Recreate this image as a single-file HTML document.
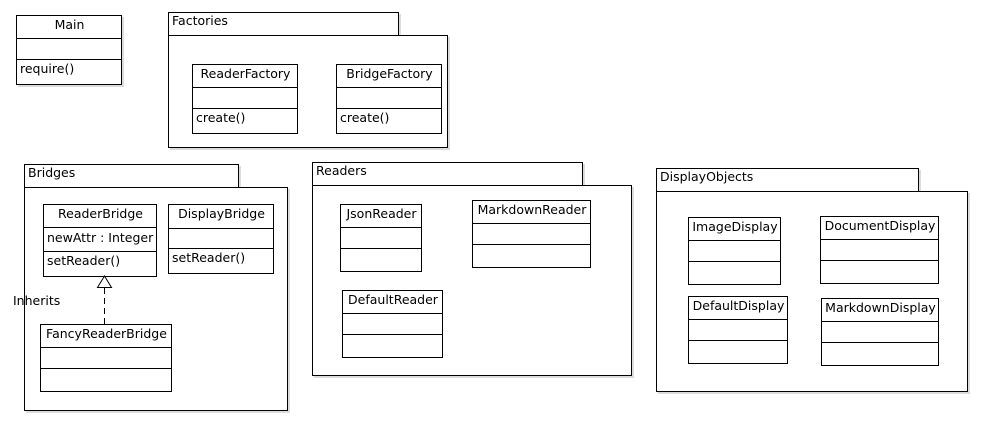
<!DOCTYPE html>
<html><head><meta charset="utf-8"><style>
html,body{margin:0;padding:0;background:#fff;}
svg{display:block;}
text{font-family:"DejaVu Sans","Liberation Sans",sans-serif;font-size:12.5px;fill:#000;}
</style></head><body>
<svg width="994" height="438" viewBox="0 0 994 438" xmlns="http://www.w3.org/2000/svg">
<g id="shadows" fill="#dcdcdc">
</g>
<g fill="none" stroke="#000" stroke-width="1" shape-rendering="crispEdges">
</g>
</svg>
<script>
const S='http://www.w3.org/2000/svg';
const svg=document.querySelector('svg');
const sh=svg.querySelector('#shadows');
const g=svg.querySelector('g[stroke]');
function el(p,t,a,txt){const e=document.createElementNS(S,t);for(const k in a)e.setAttribute(k,a[k]);if(txt)e.textContent=txt;p.appendChild(e);return e;}
function rect(x1,y1,x2,y2){
 el(sh,'rect',{x:x1+2,y:y1+2,width:x2-x1+1,height:y2-y1+1});
 el(g,'rect',{x:x1+.5,y:y1+.5,width:x2-x1,height:y2-y1,fill:'#fff'});
}
function hline(x1,x2,y){el(g,'line',{x1:x1,x2:x2+1,y1:y+.5,y2:y+.5});}
function txt(x,y,s,anchor){el(svg,'text',{x:x,y:y,'text-anchor':anchor||'start'},s);}
function pkg(name,tx1,tx2,ty1,ty2,bx2,by2){
 rect(tx1,ty1,tx2,ty2);rect(tx1,ty2,bx2,by2);
 txt(tx1+4,ty1+13,name);
}
function cls(name,x1,y1,x2,y2,l1,l2,attr,op){
 rect(x1,y1,x2,y2);hline(x1,x2,l1);hline(x1,x2,l2);
 txt((x1+x2)/2+1,y1+14,name,'middle');
 if(attr)txt(x1+4,l1+15,attr);
 if(op)txt(x1+4,l2+14,op);
}
cls('Main',16,15,121,84,38,59,null,'require()');
pkg('Factories',168,398,12,35,447,147);
cls('ReaderFactory',192,64,297,133,87,108,null,'create()');
cls('BridgeFactory',336,64,441,133,87,108,null,'create()');
pkg('Bridges',24,238,164,187,287,410);
cls('ReaderBridge',43,204,156,276,227,251,'newAttr : Integer','setReader()');
cls('DisplayBridge',168,204,273,273,228,248,null,'setReader()');
cls('FancyReaderBridge',40,324,171,391,347,368);
pkg('Readers',312,582,162,185,631,375);
cls('JsonReader',340,204,421,271,227,248);
cls('MarkdownReader',472,200,590,267,223,244);
cls('DefaultReader',342,290,442,357,313,334);
pkg('DisplayObjects',656,918,168,191,967,391);
cls('ImageDisplay',688,217,780,284,240,261);
cls('DocumentDisplay',820,216,938,283,239,260);
cls('DefaultDisplay',688,296,787,363,319,340);
cls('MarkdownDisplay',821,298,938,365,321,342);
el(svg,'line',{x1:104.5,y1:288,x2:104.5,y2:324,stroke:'#000','stroke-dasharray':'6,4'});
el(svg,'polygon',{points:'104.5,276 97.5,287.5 111.5,287.5',fill:'#fff',stroke:'#000'});
txt(13,305,'Inherits');
</script>
</body></html>
